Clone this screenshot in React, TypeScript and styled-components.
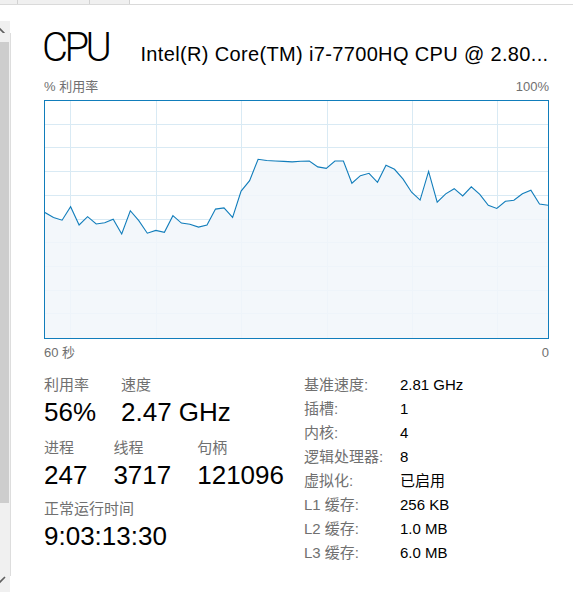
import styled, { createGlobalStyle } from "styled-components";

const GlobalStyle = createGlobalStyle`
	body {
		margin: 0;
		background: #ffffff;
		color: #000000;
		font-family: "Liberation Sans", "Noto Sans CJK SC", sans-serif;
	}
`;

const usage = [
	52.9, 50.9, 49.7, 55.4, 47.7, 51.2, 48.1, 48.6, 50.1, 43.9,
	53.7, 49.5, 44.2, 45.4, 44.6, 51.6, 48.5, 48.0, 46.8, 47.7,
	54.4, 54.9, 50.9, 62.0, 66.4, 75.4, 74.9, 74.7, 74.5, 74.3,
	74.6, 74.7, 72.2, 71.6, 74.7, 74.7, 65.3, 68.5, 69.5, 65.7,
	72.9, 71.2, 67.0, 61.5, 58.2, 70.3, 57.3, 60.8, 63.0, 59.9,
	63.8, 60.6, 56.0, 54.7, 57.7, 58.1, 60.9, 62.3, 56.5, 56.0,
];

const details = [
	["基准速度:", "2.81 GHz"],
	["插槽:", "1"],
	["内核:", "4"],
	["逻辑处理器:", "8"],
	["虚拟化:", "已启用"],
	["L1 缓存:", "256 KB"],
	["L2 缓存:", "1.0 MB"],
	["L3 缓存:", "6.0 MB"],
];

const Page = styled.div`
	display: flex;
	flex-direction: column;
`;

const TabStrip = styled.div`
	display: flex;
	height: 4px;
	border-bottom: 1px solid #dadada;
`;

const Tab = styled.div<{ $w: number }>`
	width: ${(p) => p.$w}px;
	box-sizing: border-box;
	background: #f0f0f0;
	border-right: 1px solid #d2d2d2;
`;

const Body = styled.div`
	display: flex;
	align-items: flex-start;
`;

const ScrollTrack = styled.div`
	width: 10px;
	height: 571px;
	margin-top: 16px;
	background: #f0f0f0;
	display: flex;
	flex-direction: column;
`;

const ArrowBox = styled.div<{ $h: number }>`
	height: ${(p) => p.$h}px;
	flex: none;
	svg {
		display: block;
	}
`;

const Rail = styled.div`
	flex: 1;
	border-right: 1px solid #dddddd;
	margin-right: -1px;
`;

const Thumb = styled.div`
	width: 9px;
	height: 461px;
	margin-top: 9px;
	background: #cdcdcd;
`;

const Panel = styled.div`
	width: 505px;
	margin-left: 34px;
	padding-top: 19px;
`;

const Header = styled.div`
	display: flex;
	align-items: baseline;
	height: 48px;
	white-space: nowrap;
`;

const Title = styled.div`
	font-family: Roboto, "Liberation Sans", sans-serif;
	font-weight: 300;
	font-size: 40px;
	line-height: 48px;
	letter-spacing: -3.5px;
	margin-left: -2px;
`;

const Model = styled.div`
	font-size: 20px;
	letter-spacing: 0.35px;
	margin-left: 32px;
`;

const Caption = styled.div<{ $top: number }>`
	display: flex;
	justify-content: space-between;
	margin-top: ${(p) => p.$top}px;
	font-size: 13px;
	line-height: 18px;
	color: #707070;
`;

const Graph = styled.div`
	height: 239px;
	margin-top: 4px;
	box-sizing: border-box;
	border: 1px solid #117dbb;
	svg {
		display: block;
	}
`;

const Stats = styled.div`
	display: flex;
	margin-top: 11px;
`;

const LeftStats = styled.div`
	width: 260px;
	display: flex;
	flex-direction: column;
`;

const StatRow = styled.div<{ $gap: number; $bottom: number }>`
	display: flex;
	gap: ${(p) => p.$gap}px;
	margin-bottom: ${(p) => p.$bottom}px;
`;

const StatItem = styled.div`
	display: flex;
	flex-direction: column;
`;

const StatLabel = styled.div`
	font-size: 15px;
	line-height: 24px;
	color: #707070;
`;

const StatValue = styled.div`
	font-size: 26px;
	line-height: 30px;
`;

const DetailGrid = styled.div`
	display: grid;
	grid-template-columns: 96px auto;
	grid-auto-rows: 24px;
	font-size: 15px;
	line-height: 24px;
`;

const DetailLabel = styled.div`
	color: #707070;
`;

const DetailValue = styled.div`
	color: #000000;
`;

const W = 503;
const H = 237;

const UsageChart = () => {
	const step = W / (usage.length - 1);
	const pts = usage.map((v, i) => `${(i * step).toFixed(1)},${(H - (v / 100) * H).toFixed(1)}`);
	const area = `0,${H} ${pts.join(" ")} ${W},${H}`;
	return (
		<svg width={W} height={H}>
			{Array.from({ length: 9 }, (_, i) => {
				const y = Math.round((i + 1) * 23.7) - 0.5;
				return <line key={"h" + i} x1={0} x2={W} y1={y} y2={y} stroke="#d9eaf4" />;
			})}
			{Array.from({ length: 6 }, (_, i) => {
				const x = Math.round(25.3 + i * 85.4) + 0.5;
				return <line key={"v" + i} x1={x} x2={x} y1={0} y2={H} stroke="#d9eaf4" />;
			})}
			<polygon points={area} fill="#f1f6fa" fillOpacity={0.85} />
			<polyline points={pts.join(" ")} fill="none" stroke="#117dbb" strokeWidth={1.1} />
		</svg>
	);
};

const App = () => {
	return (
		<Page>
			<GlobalStyle />
			<TabStrip>
				<Tab $w={18} />
				<Tab $w={72} />
				<Tab $w={40} />
			</TabStrip>
			<Body>
				<ScrollTrack>
					<ArrowBox $h={12}>
						<svg width="10" height="12">
							<polyline points="-5,13 0,8 5,13" fill="none" stroke="#606060" strokeWidth={1.6} />
						</svg>
					</ArrowBox>
					<Rail>
						<Thumb />
					</Rail>
					<ArrowBox $h={16}>
						<svg width="10" height="16">
							<polyline points="-5,1 0,6 5,1" fill="none" stroke="#606060" strokeWidth={1.6} />
						</svg>
					</ArrowBox>
				</ScrollTrack>
				<Panel>
					<Header>
						<Title>CPU</Title>
						<Model>Intel(R) Core(TM) i7-7700HQ CPU @ 2.80...</Model>
					</Header>
					<Caption $top={6}>
						<span>% 利用率</span>
						<span>100%</span>
					</Caption>
					<Graph>
						<UsageChart />
					</Graph>
					<Caption $top={5}>
						<span>60 秒</span>
						<span>0</span>
					</Caption>
					<Stats>
						<LeftStats>
							<StatRow $gap={25} $bottom={9}>
								<StatItem>
									<StatLabel>利用率</StatLabel>
									<StatValue>56%</StatValue>
								</StatItem>
								<StatItem>
									<StatLabel>速度</StatLabel>
									<StatValue>2.47 GHz</StatValue>
								</StatItem>
							</StatRow>
							<StatRow $gap={26} $bottom={7}>
								<StatItem>
									<StatLabel>进程</StatLabel>
									<StatValue>247</StatValue>
								</StatItem>
								<StatItem>
									<StatLabel>线程</StatLabel>
									<StatValue>3717</StatValue>
								</StatItem>
								<StatItem>
									<StatLabel>句柄</StatLabel>
									<StatValue>121096</StatValue>
								</StatItem>
							</StatRow>
							<StatRow $gap={25} $bottom={0}>
								<StatItem>
									<StatLabel>正常运行时间</StatLabel>
									<StatValue>9:03:13:30</StatValue>
								</StatItem>
							</StatRow>
						</LeftStats>
						<DetailGrid>
							{details.map(([k, v]) => (
								<>
									<DetailLabel key={k}>{k}</DetailLabel>
									<DetailValue key={k + "v"}>{v}</DetailValue>
								</>
							))}
						</DetailGrid>
					</Stats>
				</Panel>
			</Body>
		</Page>
	);
};

export default App;
